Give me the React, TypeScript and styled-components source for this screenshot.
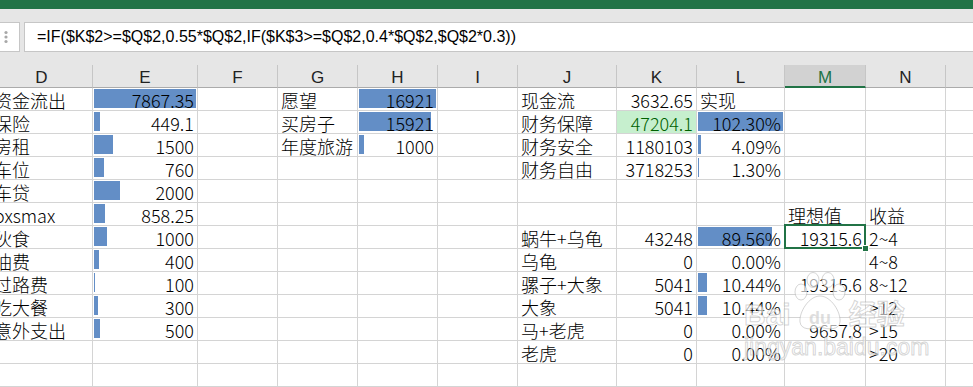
import { createGlobalStyle } from 'styled-components'
import styled from 'styled-components'

const GlobalStyle = createGlobalStyle`
  html, body {
    margin: 0;
    padding: 0;
    background: #ffffff;
    overflow: hidden;
  }
  #root {
    width: 973px;
    height: 387px;
    overflow: hidden;
    position: relative;
  }
`

const CELL_FONT = `"Liberation Sans Narrow", "Noto Sans CJK SC", sans-serif`
const UI_FONT = `"Liberation Sans", "Noto Sans CJK SC", sans-serif`
const GREEN = '#217346'

const COLS = ['D', 'E', 'F', 'G', 'H', 'I', 'J', 'K', 'L', 'M', 'N', 'O']
const WIDTHS = [102, 105, 80, 80, 80, 80, 99, 80, 88, 81, 80, 80]
const TEMPLATE = WIDTHS.map((w) => `${w}px`).join(' ')

type CellData = {
  t?: string
  right?: boolean
  bar?: number
  good?: boolean
  selected?: boolean
}
type RowData = Partial<Record<string, CellData>>

const E_MAX = 7867.35
const H_MAX = 16921
const L_MAX = 102.3

const num = (t: string, max?: number): CellData => ({
  t,
  right: true,
  bar: max ? parseFloat(t) / max : undefined,
})
const pct = (v: number): CellData => ({ t: `${v.toFixed(2)}%`, right: true, bar: v / L_MAX })

const ROWS: RowData[] = [
  { D: { t: '资金流出' }, E: num('7867.35', E_MAX), G: { t: '愿望' }, H: num('16921', H_MAX), J: { t: '现金流' }, K: num('3632.65'), L: { t: '实现' } },
  { D: { t: '保险' }, E: num('449.1', E_MAX), G: { t: '买房子' }, H: num('15921', H_MAX), J: { t: '财务保障' }, K: { t: '47204.1', right: true, good: true }, L: pct(102.3) },
  { D: { t: '房租' }, E: num('1500', E_MAX), G: { t: '年度旅游' }, H: num('1000', H_MAX), J: { t: '财务安全' }, K: num('1180103'), L: pct(4.09) },
  { D: { t: '车位' }, E: num('760', E_MAX), J: { t: '财务自由' }, K: num('3718253'), L: pct(1.3) },
  { D: { t: '车贷' }, E: num('2000', E_MAX) },
  { D: { t: 'oxsmax' }, E: num('858.25', E_MAX), M: { t: '理想值' }, N: { t: '收益' } },
  { D: { t: '伙食' }, E: num('1000', E_MAX), J: { t: '蜗牛+乌龟' }, K: num('43248'), L: pct(89.56), M: { t: '19315.6', right: true, selected: true }, N: { t: '2~4' } },
  { D: { t: '油费' }, E: num('400', E_MAX), J: { t: '乌龟' }, K: num('0'), L: pct(0), N: { t: '4~8' } },
  { D: { t: '过路费' }, E: num('100', E_MAX), J: { t: '骡子+大象' }, K: num('5041'), L: pct(10.44), M: num('19315.6'), N: { t: '8~12' } },
  { D: { t: '吃大餐' }, E: num('300', E_MAX), J: { t: '大象' }, K: num('5041'), L: pct(10.44), N: { t: '>12' } },
  { D: { t: '意外支出' }, E: num('500', E_MAX), J: { t: '马+老虎' }, K: num('0'), L: pct(0), M: num('9657.8'), N: { t: '>15' } },
  { J: { t: '老虎' }, K: num('0'), L: pct(0), N: { t: '>20' } },
  {},
]

const Window = styled.div`
  position: relative;
  width: 973px;
  height: 387px;
  overflow: hidden;
  background: #ffffff;
`

const TitleStrip = styled.div`
  height: 9px;
  background: ${GREEN};
`

const FormulaBar = styled.div`
  display: flex;
  gap: 4px;
  padding: 13px 0;
  background: #e6e6e6;
`

const NameBoxEdge = styled.div`
  width: 20px;
  height: 30px;
  box-sizing: border-box;
  background: #ffffff;
  border: 1px solid #c6c6c6;
  border-left: none;
  display: flex;
  align-items: center;
  padding-left: 2px;
`

const FormulaInput = styled.div`
  flex: 1;
  height: 30px;
  box-sizing: border-box;
  background: #ffffff;
  border: 1px solid #c6c6c6;
  border-right: none;
  padding: 0 12px;
  font: 16px/28px ${UI_FONT};
  color: #000000;
  white-space: nowrap;
`

const Sheet = styled.div`
  margin-left: -9px;
  width: 1035px;
`

const GridRow = styled.div`
  display: grid;
  grid-template-columns: ${TEMPLATE};
`

const HeaderCell = styled.div<{ $active?: boolean }>`
  height: 23px;
  box-sizing: border-box;
  padding-top: 3px;
  text-align: center;
  font: 17px/19px ${UI_FONT};
  background: ${(p) => (p.$active ? '#d2d2d2' : '#e6e6e6')};
  color: ${(p) => (p.$active ? GREEN : '#222222')};
  border-right: 1px solid #c6c6c6;
  border-bottom: ${(p) => (p.$active ? `2px solid ${GREEN}` : '1px solid #ababab')};
`

const Cell = styled.div<{ $right?: boolean; $good?: boolean }>`
  position: relative;
  height: 23px;
  box-sizing: border-box;
  padding: 2px 3px 0;
  border-right: 1px solid #d4d4d4;
  border-bottom: 1px solid #d4d4d4;
  font: 300 18px/20px ${CELL_FONT};
  text-align: ${(p) => (p.$right ? 'right' : 'left')};
  white-space: nowrap;
  background: ${(p) => (p.$good ? '#c6efce' : '#ffffff')};
  color: ${(p) => (p.$good ? '#006100' : '#000000')};
`

const CellText = styled.span`
  position: relative;
  z-index: 1;
`

const DataBar = styled.div`
  position: absolute;
  left: 1px;
  top: 1px;
  height: 19px;
  background: #638ec6;
`

const Selection = styled.div`
  position: absolute;
  left: -1px;
  top: -2px;
  right: -1px;
  bottom: -1px;
  border: 2px solid ${GREEN};
  z-index: 2;
`

const FillHandle = styled.div`
  position: absolute;
  right: -5px;
  bottom: -5px;
  width: 5px;
  height: 5px;
  background: ${GREEN};
  border: 1px solid #ffffff;
`

const Watermark = styled.div`
  position: absolute;
  left: 744px;
  top: 272px;
  width: 180px;
  pointer-events: none;
  z-index: 5;
`

const MarkTop = styled.div`
  display: flex;
  align-items: flex-end;
  height: 60px;
`

const MarkWord = styled.span<{ $size: number }>`
  font: bold ${(p) => p.$size}px/1 "Liberation Sans", "Noto Sans CJK SC", sans-serif;
  color: rgba(255, 255, 255, 0.65);
  -webkit-text-stroke: 1px rgba(150, 150, 150, 0.4);
  padding-bottom: 2px;
`

const MarkUrl = styled.div`
  font: 23px/26px "Liberation Sans", sans-serif;
  color: rgba(255, 255, 255, 0.65);
  -webkit-text-stroke: 1px rgba(150, 150, 150, 0.4);
  margin-top: 2px;
`

function Grip() {
  return (
    <svg width="8" height="14" viewBox="0 0 8 14">
      <circle cx="4" cy="2.5" r="1.6" fill="#a8a8a8" />
      <circle cx="4" cy="7" r="1.6" fill="#a8a8a8" />
      <circle cx="4" cy="11.5" r="1.6" fill="#a8a8a8" />
    </svg>
  )
}

function Paw() {
  const s = 'rgba(150,150,150,0.4)'
  const f = 'rgba(255,255,255,0.65)'
  return (
    <svg width="58" height="60" viewBox="0 0 58 60">
      <ellipse cx="10" cy="20" rx="6" ry="8" fill={f} stroke={s} />
      <ellipse cx="22" cy="8" rx="6" ry="7.5" fill={f} stroke={s} />
      <ellipse cx="37" cy="8" rx="6" ry="7.5" fill={f} stroke={s} />
      <ellipse cx="48" cy="20" rx="6" ry="8" fill={f} stroke={s} />
      <path d="M29 24 C18 24 8 40 9 50 C10 58 20 58 29 55 C38 58 48 58 49 50 C50 40 40 24 29 24 Z" fill={f} stroke={s} />
      <text x="29" y="52" textAnchor="middle" fontFamily="Liberation Sans, sans-serif" fontWeight="bold" fontSize="18" fill="rgba(190,190,190,0.5)">du</text>
    </svg>
  )
}

export default function App() {
  return (
    <>
      <GlobalStyle />
      <Window>
        <TitleStrip />
        <FormulaBar>
          <NameBoxEdge>
            <Grip />
          </NameBoxEdge>
          <FormulaInput>=IF($K$2&gt;=$Q$2,0.55*$Q$2,IF($K$3&gt;=$Q$2,0.4*$Q$2,$Q$2*0.3))</FormulaInput>
        </FormulaBar>
        <Sheet>
          <GridRow>
            {COLS.map((c) => (
              <HeaderCell key={c} $active={c === 'M'}>
                {c}
              </HeaderCell>
            ))}
          </GridRow>
          {ROWS.map((row, i) => (
            <GridRow key={i}>
              {COLS.map((c, j) => {
                const d = row[c] || {}
                const barW = d.bar && d.bar > 0 ? Math.max(1, Math.round(d.bar * (WIDTHS[j] - 3))) : 0
                return (
                  <Cell key={c} $right={d.right} $good={d.good}>
                    {barW > 0 && <DataBar style={{ width: barW }} />}
                    {d.t && <CellText>{d.t}</CellText>}
                    {d.selected && (
                      <Selection>
                        <FillHandle />
                      </Selection>
                    )}
                  </Cell>
                )
              })}
            </GridRow>
          ))}
        </Sheet>
        <Watermark>
          <MarkTop>
            <MarkWord $size={30}>Bai</MarkWord>
            <Paw />
            <MarkWord $size={28}>经验</MarkWord>
          </MarkTop>
          <MarkUrl>jingyan.baidu.com</MarkUrl>
        </Watermark>
      </Window>
    </>
  )
}
